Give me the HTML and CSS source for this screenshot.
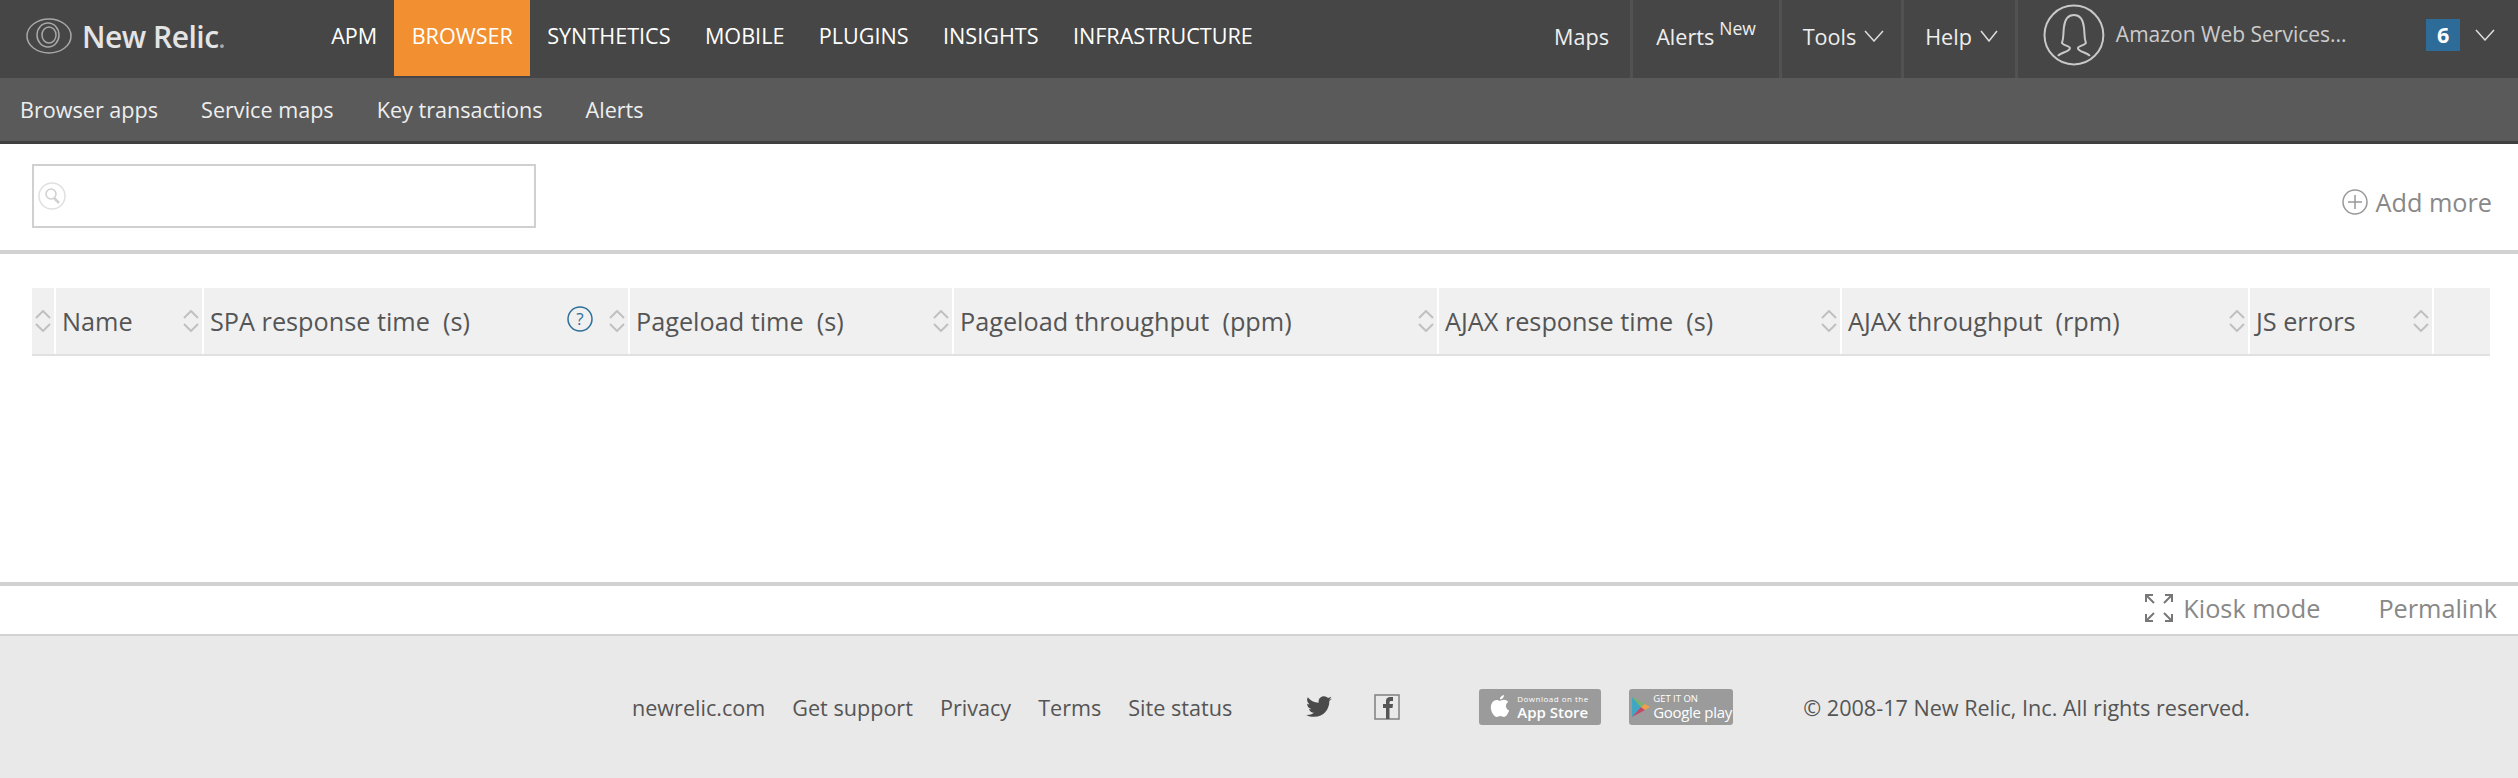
FILE: index.html
```html
<!DOCTYPE html>
<html lang="en">
<head>
  <meta charset="UTF-8" />
  <title>New Relic Browser</title>
  <link rel="stylesheet" href="styles.css">
</head>
<body>

  <header class="topbar">
    <a class="logo">
      <svg class="logo-mark" width="46" height="36" viewBox="0 0 46 36" fill="none" stroke="#a8a8a8" stroke-width="1.5">
        <ellipse cx="23" cy="18" rx="22" ry="17"/>
        <ellipse cx="22" cy="17" rx="11" ry="12"/>
        <ellipse cx="23" cy="17" rx="7" ry="8"/>
      </svg>
      <span class="logo-text">New Relic<small>.</small></span>
    </a>
    <nav class="main-nav">
      <a>APM</a>
      <a class="active">BROWSER</a>
      <a>SYNTHETICS</a>
      <a>MOBILE</a>
      <a>PLUGINS</a>
      <a>INSIGHTS</a>
      <a>INFRASTRUCTURE</a>
    </nav>
    <nav class="right-nav">
      <a class="maps">Maps</a>
      <a class="alerts">Alerts<sup>New</sup></a>
      <a class="tools">Tools
        <svg class="chev" width="20" height="12" viewBox="0 0 20 12"><path d="M1 1l9 10 9-10"/></svg>
      </a>
      <a class="help">Help
        <svg class="chev" width="18" height="12" viewBox="0 0 18 12"><path d="M1 1l8 10 8-10"/></svg>
      </a>
      <div class="account">
        <svg width="62" height="62" viewBox="0 0 62 62" fill="none" stroke="#c8c8c8" stroke-width="2">
          <circle cx="31" cy="31" r="29.5"/>
          <path d="M15 52c3-4 12-4 12-8 0-2-6-2-8-5 2-5 1-9 2-16 1-8 5-12 10-12s9 4 10 12c1 7 0 11 2 16-2 3-8 3-8 5 0 4 9 4 12 8"/>
        </svg>
        <span class="account-name">Amazon Web Services...</span>
        <span class="badge">6</span>
        <svg class="chev" width="20" height="12" viewBox="0 0 20 12"><path d="M1 1l9 10 9-10"/></svg>
      </div>
    </nav>
  </header>

  <nav class="subnav">
    <a>Browser apps</a>
    <a>Service maps</a>
    <a>Key transactions</a>
    <a>Alerts</a>
  </nav>

  <section class="toolbar">
    <div class="search">
      <svg width="28" height="28" viewBox="0 0 28 28" fill="none" stroke="#e0e0e0" stroke-width="1.5">
        <circle cx="14" cy="14" r="13"/>
        <circle cx="13" cy="12" r="5" stroke="#d0d0d0"/>
        <path d="M16 16l5 5" stroke="#d0d0d0" stroke-width="2.5"/>
      </svg>
    </div>
    <a class="add-more">
      <svg width="26" height="26" viewBox="0 0 26 26" fill="none" stroke="#999" stroke-width="1.5">
        <circle cx="13" cy="13" r="12"/>
        <path d="M13 6v14M6 13h14"/>
      </svg>
      Add more
    </a>
  </section>

  <main class="content">
    <div class="thead">
      <div class="th"><svg class="sort" viewBox="0 0 16 22"><path d="M1 8l7-7 7 7M1 14l7 7 7-7"/></svg></div>
      <div class="th">Name<svg class="sort" viewBox="0 0 16 22"><path d="M1 8l7-7 7 7M1 14l7 7 7-7"/></svg></div>
      <div class="th">SPA response time &nbsp;(s)
        <svg class="help-icon" width="26" height="26" viewBox="0 0 26 26">
          <circle cx="13" cy="13" r="12" fill="none" stroke="#2d6f99" stroke-width="1.5"/>
          <text x="13" y="19" text-anchor="middle" font-size="17" fill="#2d6f99" font-family="Open Sans">?</text>
        </svg>
        <svg class="sort" viewBox="0 0 16 22"><path d="M1 8l7-7 7 7M1 14l7 7 7-7"/></svg></div>
      <div class="th">Pageload time &nbsp;(s)<svg class="sort" viewBox="0 0 16 22"><path d="M1 8l7-7 7 7M1 14l7 7 7-7"/></svg></div>
      <div class="th">Pageload throughput &nbsp;(ppm)<svg class="sort" viewBox="0 0 16 22"><path d="M1 8l7-7 7 7M1 14l7 7 7-7"/></svg></div>
      <div class="th">AJAX response time &nbsp;(s)<svg class="sort" viewBox="0 0 16 22"><path d="M1 8l7-7 7 7M1 14l7 7 7-7"/></svg></div>
      <div class="th">AJAX throughput &nbsp;(rpm)<svg class="sort" viewBox="0 0 16 22"><path d="M1 8l7-7 7 7M1 14l7 7 7-7"/></svg></div>
      <div class="th">JS errors<svg class="sort" viewBox="0 0 16 22"><path d="M1 8l7-7 7 7M1 14l7 7 7-7"/></svg></div>
      <div class="th"></div>
    </div>
  </main>

  <div class="page-actions">
    <a class="kiosk">
      <svg width="28" height="28" viewBox="0 0 28 28" fill="none" stroke="#777" stroke-width="2">
        <path d="M1 8V1h7M1 1l8 8M27 8V1h-7M27 1l-8 8M1 20v7h7M1 27l8-8M27 20v7h-7M27 27l-8-8"/>
      </svg>
      Kiosk mode
    </a>
    <a class="permalink">Permalink</a>
  </div>

  <footer class="footer">
    <div class="footer-links">
      <a>newrelic.com</a>
      <a>Get support</a>
      <a>Privacy</a>
      <a>Terms</a>
      <a>Site status</a>
    </div>
    <svg class="twitter" width="26" height="22" viewBox="0 0 24 20" fill="#4a4a4a">
      <path d="M24 2.4c-.9.4-1.800.7-2.800.8 1-.6 1.800-1.600 2.200-2.700-1 .6-2 1-3.100 1.200C19.300.7 18 0 16.500 0c-2.700 0-4.900 2.200-4.900 4.900 0 .4 0 .8.100 1.100C7.600 5.800 4 3.900 1.700.9c-.4.700-.7 1.600-.7 2.500 0 1.700.9 3.200 2.200 4.100-.8 0-1.600-.2-2.200-.6v.1c0 2.400 1.700 4.400 3.900 4.800-.4.100-.8.200-1.300.2-.3 0-.6 0-.9-.1.600 2 2.400 3.400 4.600 3.400-1.700 1.300-3.800 2.100-6.100 2.100-.4 0-.8 0-1.200-.1C2.200 18.300 4.800 19.100 7.500 19.100c9.100 0 14-7.500 14-14v-.6c1-.7 1.800-1.600 2.500-2.100z"/>
    </svg>
    <svg class="facebook" width="26" height="26" viewBox="0 0 26 26">
      <rect x="1" y="1" width="24" height="24" fill="none" stroke="#808080" stroke-width="1.500"/>
      <path d="M12 25V14H9v-4h3V7c0-3 2-4 4-4h3v4h-2c-1 0-1.500.5-1.500 1.500V10h3.500l-.5 4h-3v11z" fill="#555"/>
    </svg>
    <div class="store app-store">
      <svg width="20" height="24" viewBox="0 0 20 24" fill="#fff">
        <path d="M14 0c.2 2-1.800 4.500-4 4.300C9.800 2.300 12 .2 14 0zM10 5.800c1 0 2.200-1 4-1 1.500 0 3.200.8 4.300 2.300-3.500 2-3 6.800.9 8.400-1 2.600-3 6.500-5.200 6.500-1.300 0-2-.9-3.600-.9s-2.400.9-3.700.9C4 22 .8 16.500.8 12.500c0-4.500 3-7.500 5.800-7.500 1.400 0 2.600.8 3.400.8z"/>
      </svg>
      <div>
        <div class="store-small">Download on the</div>
        <div class="store-big">App Store</div>
      </div>
    </div>
    <div class="store google-play">
      <svg width="18" height="20" viewBox="0 0 18 20">
        <path d="M0 0l9 10-9 10z" fill="#3fa7c4"/>
        <path d="M0 0l13 7-4 3z" fill="#7cb36b"/>
        <path d="M0 20l13-7-4-3z" fill="#c2476b"/>
        <path d="M13 7l5 3-5 3-4-3z" fill="#eda04a"/>
      </svg>
      <div>
        <div class="store-small gp-small">GET IT ON</div>
        <div class="store-big gp">Google play</div>
      </div>
    </div>
    <div class="copyright">© 2008-17 New Relic, Inc. All rights reserved.</div>
  </footer>

</body>
</html>
```

FILE: styles.css
```css
body {
  margin: 0;
  font-family: "Open Sans", Arial, sans-serif;
  font-size: 21.6px;
  background: #fff;
  color: #555;
  overflow: hidden;
}

/* top bar */
.topbar {
  display: flex;
  height: 78px;
  background: #464646;
  color: #fff;
}

.logo {
  display: flex;
  align-items: center;
  width: 314px;
  padding: 0 0 6px 26px;
  box-sizing: border-box;
}

.logo-mark {
  margin-right: 10px;
}

.logo-text {
  font-size: 30px;
  font-weight: 600;
  color: #e4e4e4;
  letter-spacing: -0.5px;
}

.logo-text small {
  color: #aaa;
}

.main-nav {
  display: flex;
  height: 76px;
}

.main-nav a {
  padding: 0 17.2px;
  line-height: 72px;
}

.main-nav .active {
  background: #f29031;
}

.right-nav {
  display: flex;
  margin-left: auto;
  color: #eee;
}

.right-nav > a {
  display: flex;
  align-items: center;
  gap: 8px;
  padding-bottom: 6px;
  box-sizing: border-box;
  border-right: 3px solid #525252;
}

.maps {
  width: 133px;
  justify-content: flex-end;
  padding-right: 21px;
}

.alerts {
  width: 149px;
  justify-content: center;
}

.alerts sup {
  font-size: 17.5px;
  line-height: 1;
  margin-left: -3px;
  margin-bottom: 14px;
}

.tools {
  width: 122px;
  padding-left: 4px;
  justify-content: center;
}

.help {
  width: 114px;
  padding-left: 4px;
  justify-content: center;
}

.chev {
  fill: none;
  stroke: #ddd;
  stroke-width: 1.5;
}

.account {
  display: flex;
  align-items: center;
  width: 500px;
  padding: 0 23px 8px 25px;
  box-sizing: border-box;
  color: #ccc;
  font-size: 21px;
}

.account-name {
  margin-left: 11px;
  width: 311px;
  margin-top: -2px;
}

.badge {
  width: 34px;
  height: 32px;
  line-height: 32px;
  text-align: center;
  background: #2d6c99;
  color: #fff;
  font-size: 21.6px;
  font-weight: 700;
  margin-right: 15px;
}

/* second level nav */
.subnav {
  display: flex;
  gap: 43px;
  height: 66px;
  padding-left: 20px;
  box-sizing: border-box;
  background: #5a5a5a;
  border-bottom: 3px solid #3f3f3f;
  color: #eee;
  line-height: 64px;
}

.toolbar {
  display: flex;
  justify-content: space-between;
  height: 110px;
  padding: 20px 26px 0 32px;
  box-sizing: border-box;
  border-bottom: 4px solid #d2d2d2;
}

.search {
  display: flex;
  align-items: center;
  width: 504px;
  height: 64px;
  box-sizing: border-box;
  padding-left: 4px;
  border: 2px solid #d0d0d0;
}

.add-more {
  display: flex;
  align-items: center;
  gap: 8px;
  height: 36px;
  margin-top: 20px;
  font-size: 25.25px;
  color: #888;
}

.content {
  height: 332px;
  padding: 34px 28px 0 32px;
  box-sizing: border-box;
  border-bottom: 4px solid #d2d2d2;
}

.thead {
  display: grid;
  grid-template-columns: 24px 148px 426px 324px 485px 403px 408px 184px 57px;
  height: 68px;
  background: #f0f0f0;
  border-bottom: 2px solid #e0e0e0;
  box-sizing: border-box;
}

.th {
  display: flex;
  align-items: center;
  padding: 0 3px 0 6px;
  border-right: 2px solid #fff;
  font-size: 25.25px;
  white-space: nowrap;
  color: #555;
}

.th:last-child {
  border-right: none;
}

.sort {
  width: 16px;
  height: 22px;
  margin-left: auto;
  flex: none;
  fill: none;
  stroke: #c0c0c0;
  stroke-width: 2;
}

.th:first-child {
  padding: 0 3px;
}

.help-icon {
  margin-left: auto;
  margin-right: 16px;
  margin-top: -4px;
}

.help-icon + .sort {
  margin-left: 0;
}

.page-actions {
  display: flex;
  justify-content: flex-end;
  gap: 58px;
  height: 50px;
  padding: 0 21px 0 0;
  box-sizing: border-box;
  border-bottom: 2px solid #d2d2d2;
  font-size: 25.25px;
  color: #888;
  line-height: 44px;
}

.kiosk {
  display: flex;
  align-items: center;
  gap: 10px;
  height: 44px;
}

.footer {
  display: flex;
  align-items: center;
  height: 142px;
  padding-left: 632px;
  box-sizing: border-box;
  background: #e9e9e9;
  color: #555;
}

.footer-links {
  display: flex;
  gap: 27px;
}

.twitter {
  margin-left: 74px;
}

.facebook {
  margin-left: 42px;
}

.store {
  display: flex;
  align-items: center;
  height: 36px;
  border-radius: 3px;
  background: #9b9b9b;
  color: #fff;
  box-sizing: border-box;
}

.app-store {
  width: 122px;
  margin-left: 79px;
  gap: 7px;
  padding-left: 11px;
}

.google-play {
  width: 104px;
  margin-left: 28px;
  gap: 3px;
  padding-left: 3px;
}

.store-small {
  font-size: 8px;
  line-height: 10px;
  letter-spacing: 0.5px;
}

.store-small.gp-small {
  font-size: 9.5px;
  letter-spacing: 0;
}

.store-big {
  font-size: 15px;
  line-height: 17px;
  font-weight: 600;
  white-space: nowrap;
}

.store-big.gp {
  font-weight: 400;
  font-size: 15px;
  letter-spacing: -0.3px;
}

.copyright {
  margin-left: 70px;
  white-space: nowrap;
}
```
